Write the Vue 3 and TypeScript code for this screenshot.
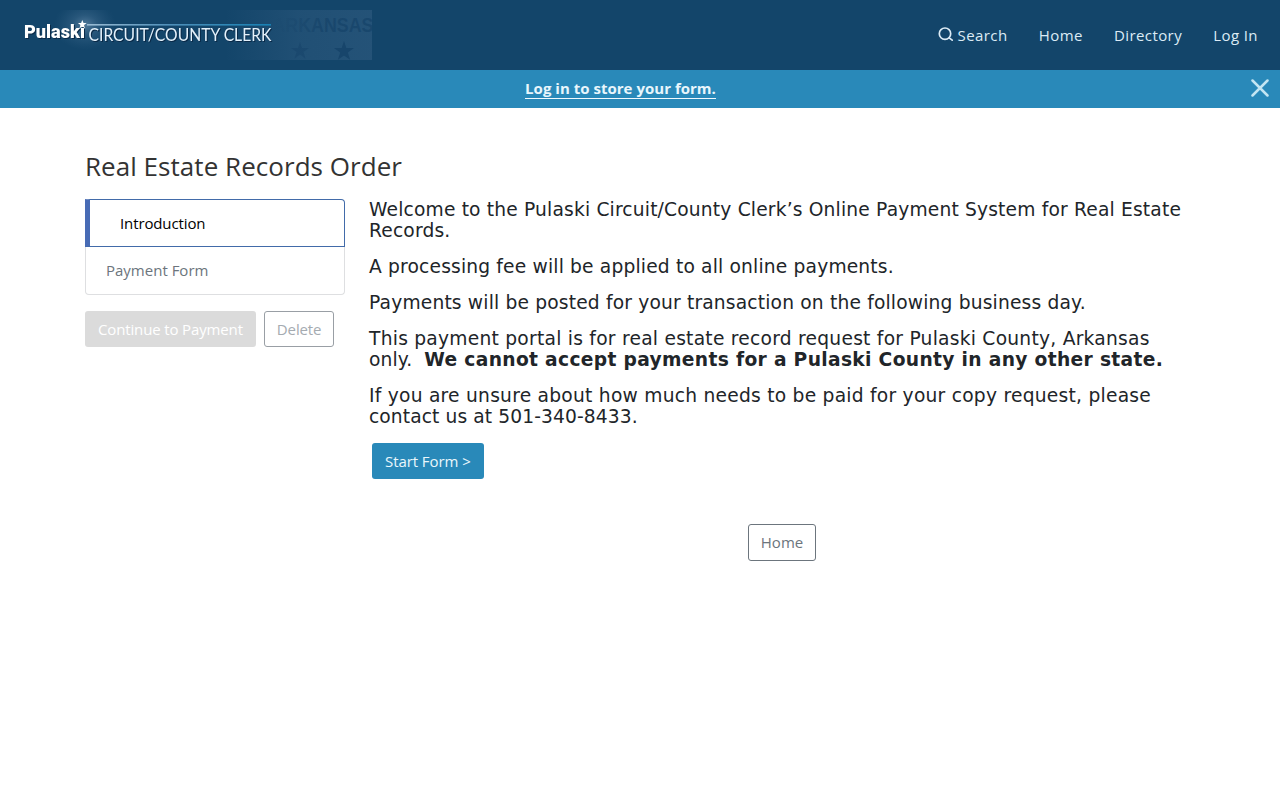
<script setup lang="ts">
const navLinks: string[] = ['Home', 'Directory', 'Log In']
</script>

<template>
  <div class="page">
    <header class="topbar">
      <svg class="logo" width="362" height="50" viewBox="10 10 362 50" role="img" aria-label="Pulaski Circuit/County Clerk">
        <defs>
          <radialGradient id="glow">
            <stop offset="0" stop-color="#87a8c5" stop-opacity=".55" />
            <stop offset=".4" stop-color="#6389ab" stop-opacity=".27" />
            <stop offset="1" stop-color="#426d91" stop-opacity="0" />
          </radialGradient>
          <linearGradient id="fade">
            <stop offset="0" stop-color="#265479" stop-opacity="0" />
            <stop offset=".5" stop-color="#265479" stop-opacity=".7" />
            <stop offset="1" stop-color="#265479" stop-opacity=".9" />
          </linearGradient>
          <linearGradient id="rule">
            <stop offset="0" stop-color="#9bbcd4" />
            <stop offset=".45" stop-color="#4f8fb9" />
            <stop offset="1" stop-color="#1680b3" />
          </linearGradient>
          <linearGradient id="plate">
            <stop offset="0" stop-color="#17456b" stop-opacity="0" />
            <stop offset=".5" stop-color="#17456b" stop-opacity=".85" />
          </linearGradient>
        </defs>
        <ellipse cx="85" cy="25" rx="31" ry="25" fill="url(#glow)" />
        <rect x="225" y="10" width="147" height="50" fill="url(#fade)" />
        <text x="272.5" y="32" class="plate" fill="url(#plate)" textLength="101" lengthAdjust="spacingAndGlyphs">ARKANSAS</text>
        <path d="M344 41l2.3 7h7.7l-6.2 4.5 2.3 7.3-6.1-4.4-6.1 4.4 2.3-7.3-6.2-4.5h7.7z" fill="#17456b" />
        <path d="M300 42l2 6h7l-5.6 4 2.1 6.5-5.5-4-5.5 4 2.1-6.5-5.6-4h7z" fill="#17456b" opacity=".6" />
        <rect x="87" y="24" width="184" height="1.6" fill="url(#rule)" />
        <text x="24" y="38" class="name" textLength="61" lengthAdjust="spacingAndGlyphs">Pulaski</text>
        <path d="M82.3 20l1.2 3.1h3.2l-2.6 2 1 3.1-2.8-1.8-2.8 1.8 1-3.1-2.6-2h3.2z" fill="#fff" />
        <text x="88.5" y="41" class="office" textLength="183" lengthAdjust="spacingAndGlyphs">CIRCUIT/COUNTY CLERK</text>
      </svg>
      <nav class="nav">
        <a class="search">
          <svg width="16" height="16" viewBox="0 0 16 16" fill="none" stroke="currentColor" stroke-width="1.7" stroke-linecap="round">
            <circle cx="7" cy="6.7" r="5.7" /><path d="M11.2 10.8l3 2.4" />
          </svg>
          <span>Search</span>
        </a>
        <a v-for="link in navLinks" :key="link">{{ link }}</a>
      </nav>
    </header>

    <div class="notice">
      <a>Log in to store your form.</a>
      <svg class="close" width="18" height="18" viewBox="0 0 18 18" stroke="#c3e5f2" stroke-width="2.5" stroke-linecap="round">
        <path d="M1.5 1.5l15 15M16.5 1.5l-15 15" />
      </svg>
    </div>

    <main class="container">
      <h1>Real Estate Records Order</h1>
      <div class="columns">
        <aside>
          <div class="steps">
            <div class="step active">Introduction</div>
            <div class="step">Payment Form</div>
          </div>
          <div class="actions">
            <button class="btn disabled">Continue to Payment</button>
            <button class="btn outline faded">Delete</button>
          </div>
        </aside>
        <section class="content">
          <div class="copy">
            <p>Welcome to the Pulaski Circuit/County Clerk’s Online Payment System for Real Estate<br>Records.</p>
            <p>A processing fee will be applied to all online payments.</p>
            <p>Payments will be posted for your transaction on the following business day.</p>
            <p><span class="loose">This payment portal is for real estate record request for Pulaski County, Arkansas</span><br><span class="lead">only.&nbsp; </span><strong>We cannot accept payments for a Pulaski County in any other state.</strong></p>
            <p><span class="loose">If you are unsure about how much needs to be paid for your copy request, please</span><br><span class="lead">contact us at 501-340-8433.</span></p>
          </div>
          <button class="btn primary">Start Form &gt;</button>
          <div class="footer"><button class="btn outline home">Home</button></div>
        </section>
      </div>
    </main>
  </div>
</template>

<style>
body { margin: 0; background: #fff; }
</style>

<style scoped>
.page { font: 15px/22.5px "Open Sans", sans-serif; color: #212529; }
.topbar { height: 70px; box-sizing: border-box; padding: 0 22px 0 10px; background: #13456a; display: flex; align-items: center; justify-content: space-between; }
.logo { display: block; }
.plate { font: bold 20px "Liberation Sans", sans-serif; }
.name { font: 900 18.5px Roboto, sans-serif; fill: #fff; filter: drop-shadow(1px 1px .5px #0a2947); }
.office { font: 17px Lato, sans-serif; fill: #e4f1fb; filter: drop-shadow(1px 1px .5px #0a2947); }
.nav { display: flex; gap: 31.1px; color: #dcebf5; letter-spacing: .42px; }
.search { display: flex; gap: 4px; align-items: center; }
.notice { height: 38px; background: #2989b9; display: flex; align-items: center; justify-content: center; position: relative; }
.notice a { color: #e8f6fc; font-weight: 700; line-height: 19px; border-bottom: 1px solid #f0f9fd; margin-right: 39px; letter-spacing: .02px; }
.close { position: absolute; right: 11px; top: 9px; }
.container { width: 1110px; margin: 0 auto; padding-top: 42px; }
h1 { margin: 0 0 17px; font-size: 26px; line-height: 32px; font-weight: 400; color: #333; letter-spacing: .04px; }
.columns { display: grid; grid-template-columns: 260px 1fr; column-gap: 24px; }
.steps { display: flex; flex-direction: column; }
.step { height: 48px; box-sizing: border-box; padding: 12px 20px; border: 1px solid #dedfe1; border-top: 0; border-radius: 0 0 4px 4px; color: #6c757d; }
.step.active { padding: 12px 30px; border: 1px solid #426ba9; border-left: 5px solid #486bb5; border-radius: 0 4px 0 0; color: #000; letter-spacing: -.12px; }
.actions { display: flex; gap: 8px; margin-top: 16px; }
.btn { box-sizing: border-box; height: 36px; padding: 0 12px; border: 1px solid transparent; border-radius: 3px; font: 15px/22px "Open Sans", sans-serif; letter-spacing: -.14px; white-space: nowrap; background: #fff; }
.disabled { background: #dbdbdb; color: #fff; }
.outline { color: #6c757d; border-color: #6c757d; }
.faded { color: #a5abb1; border-color: #999fa5; }
.primary { background: #2989b9; color: #e9f7fc; margin-left: 3px; letter-spacing: -.07px; }
.copy { font: 18.667px/21px "DejaVu Sans", sans-serif; letter-spacing: .17px; white-space: nowrap; }
.copy p { margin: 0 0 15px; }
.copy strong { letter-spacing: .33px; }
.loose { letter-spacing: .245px; }
.lead { letter-spacing: .1px; }
.content .primary { display: block; margin-top: 16px; }
.footer { margin-top: 45px; text-align: center; }
.footer .home { height: 37px; padding-bottom: 2px; letter-spacing: 0; }
</style>
